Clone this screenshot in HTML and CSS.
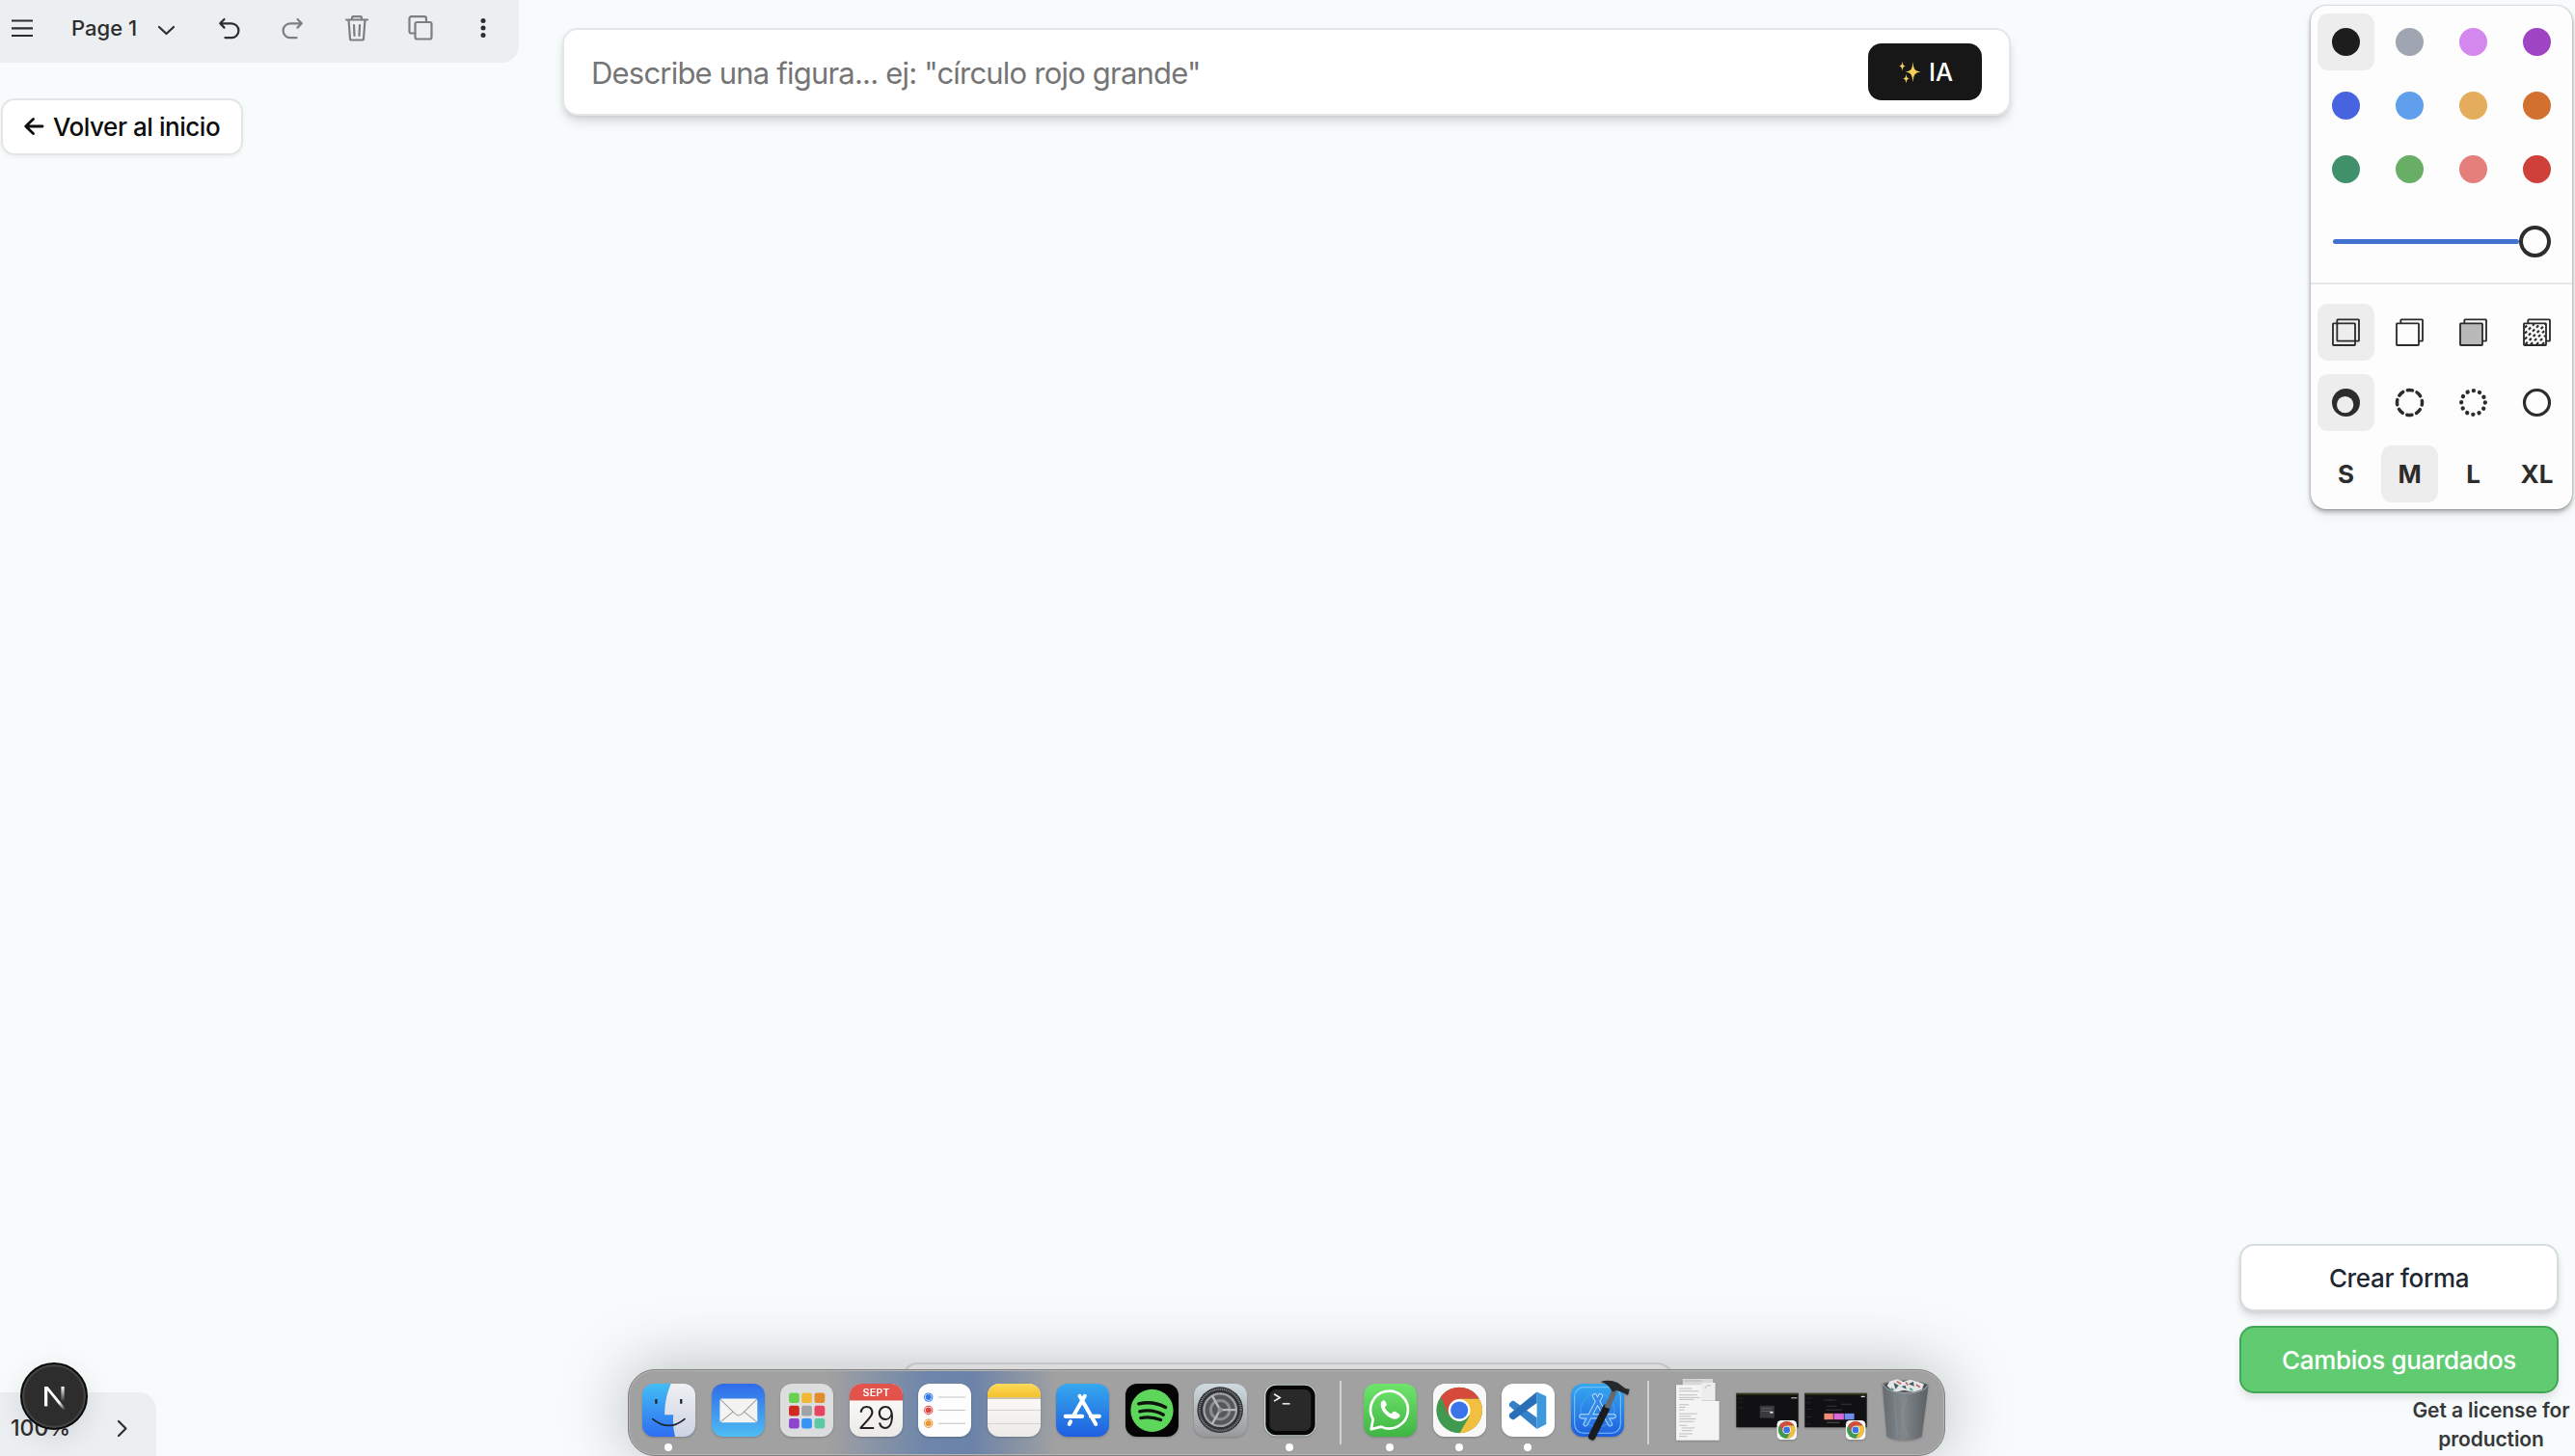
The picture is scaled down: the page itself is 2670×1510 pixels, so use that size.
FILE: index.html
```html
<!DOCTYPE html>
<html lang="es">
<head>
<meta charset="utf-8">
<title>Pizarra</title>
<link rel="stylesheet" href="styles.css">
</head>
<body>
<svg class="defs" width="0" height="0" aria-hidden="true">
  <defs>
    <linearGradient id="gFinder" x1="0" y1="0" x2="0" y2="1"><stop offset="0" stop-color="#43bdf5"/><stop offset="1" stop-color="#2f6df0"/></linearGradient>
    <linearGradient id="gFace" x1="0" y1="0" x2="0" y2="1"><stop offset="0" stop-color="#f1f1f5"/><stop offset="1" stop-color="#cdd3e2"/></linearGradient>
    <linearGradient id="gMail" x1="0" y1="0" x2="0" y2="1"><stop offset="0" stop-color="#2f6be9"/><stop offset="1" stop-color="#4fbdf3"/></linearGradient>
    <linearGradient id="gPaper" x1="0" y1="0" x2="0" y2="1"><stop offset="0" stop-color="#fff"/><stop offset="1" stop-color="#eceae6"/></linearGradient>
    <linearGradient id="gYellow" x1="0" y1="0" x2="0" y2="1"><stop offset="0" stop-color="#fbdb5b"/><stop offset="1" stop-color="#f5bf2b"/></linearGradient>
    <linearGradient id="gStore" x1="0" y1="0" x2="0" y2="1"><stop offset="0" stop-color="#35a8ef"/><stop offset="1" stop-color="#1f5fe0"/></linearGradient>
    <linearGradient id="gSteel" x1="0" y1="0" x2="0" y2="1"><stop offset="0" stop-color="#cfdbe0"/><stop offset="1" stop-color="#98999b"/></linearGradient>
    <linearGradient id="gWhats" x1="0" y1="0" x2="0" y2="1"><stop offset="0" stop-color="#6fe46c"/><stop offset="1" stop-color="#3fb544"/></linearGradient>
    <linearGradient id="gBin" x1="0" y1="0" x2="1" y2="0"><stop offset="0" stop-color="#666b70"/><stop offset=".45" stop-color="#82878c"/><stop offset="1" stop-color="#595e63"/></linearGradient>
    <linearGradient id="gN" x1="0" y1="0" x2="0" y2="1"><stop offset="0" stop-color="#fff"/><stop offset="1" stop-color="#fff" stop-opacity="0"/></linearGradient>
    <linearGradient id="gNd" gradientUnits="userSpaceOnUse" x1="160" y1="170" x2="200" y2="216"><stop offset="0" stop-color="#fff"/><stop offset=".5" stop-color="#fff"/><stop offset="1" stop-color="#fff" stop-opacity="0"/></linearGradient>
    <clipPath id="cFinder"><rect x="78" y="103" width="164" height="164" rx="36"/></clipPath>
    <clipPath id="cCal"><rect x="721" y="103" width="164" height="164" rx="36"/></clipPath>
    <clipPath id="cNotes"><rect x="70" y="103" width="164" height="164" rx="36"/></clipPath>
    <clipPath id="cChrome"><circle cx="0" cy="0" r="71"/></clipPath>
    <symbol id="chrome" viewBox="-72 -72 144 144">
      <g clip-path="url(#cChrome)">
        <rect x="-72" y="-72" width="144" height="144" fill="#3f9a50"/>
        <path d="M-72 -40 L-30 17 L-72 -72 L72 -72 L72 -35 L0 -35 L-32 18 Z" fill="#d64a3b"/>
        <path d="M0 -35 L80 -35 L80 80 L-4 80 L32 17 L0 0Z" fill="#f3bf3f"/>
      </g>
      <circle r="34" fill="#fff"/><circle r="27" fill="#3a74e8"/>
    </symbol>
  </defs>
</svg>

<main class="app">
  <section class="top">
    <div class="top-left">
      <nav class="menubar">
        <svg class="mi menu" viewBox="0 0 22 18"><path d="M0 1.500h22M0 9.300h22M0 17h22"/></svg>
        <span class="page-name">Page 1</span>
        <svg class="mi chev" viewBox="0 0 17 9"><path d="M1 1l7.500 7L16 1"/></svg>
        <svg class="mi undo" viewBox="0 0 22 22"><path d="M5.500 1L1.200 5.300l4.300 4.300M1.500 5.300H13a7.300 7.300 0 0 1 0 14.900H6.500"/></svg>
        <svg class="mi redo dim" viewBox="0 0 22 22"><path d="M16.500 1l4.300 4.300-4.300 4.300M20.500 5.300H9a7.300 7.300 0 0 0 0 14.900h6.500"/></svg>
        <svg class="mi trash dim" viewBox="0 0 24 27"><path d="M1 4.500h22M3.500 4.500L5 24a1.500 1.500 0 0 0 1.500 1.500h11A1.500 1.500 0 0 0 19 24l1.500-19.500M7 4V2.500A1.300 1.300 0 0 1 8.300 1.200h7.400A1.300 1.300 0 0 1 17 2.500V4M9 10l.5 11M15 10l-.5 11"/></svg>
        <svg class="mi copy dim" viewBox="0 0 26 26"><rect x="7.500" y="7" width="17" height="17.500" rx="2"/><path d="M7.500 18.500H3.500a2 2 0 0 1-2-2V3.200a2 2 0 0 1 2-2H17a2 2 0 0 1 2 2V7"/></svg>
        <svg class="mi dots" viewBox="0 0 6 20"><circle cx="3" cy="2.600" r="2.500"/><circle cx="3" cy="10" r="2.500"/><circle cx="3" cy="17.400" r="2.500"/></svg>
      </nav>
      <button class="back"><svg viewBox="0 0 20 18"><path d="M19 9H2M9.500 1.500L1.700 9l7.800 7.500"/></svg><span>Volver al inicio</span></button>
    </div>

    <form class="prompt">
      <span class="placeholder">Describe una figura... ej: "círculo rojo grande"</span>
      <button class="ai" type="button">
        <svg viewBox="0 0 24 24"><path d="M14.500 1C15.300 8.500 16 10.500 22.500 11.500 16 12.500 15.300 15 14.500 22.500 13.700 15 13 12.500 6.800 11.500 13 10.500 13.700 8.500 14.500 1ZM3.500 .5C4 4 4.300 5 7 5.500 4.300 6 4 7.500 3.500 10.500 3 7.500 2.700 6 0 5.500 2.700 5 3 4 3.500 .5ZM7.500 13.500C8 17 8.300 18 11 18.500 8.300 19 8 20.500 7.500 23.500 7 20.500 6.700 19 4 18.500 6.700 18 7 17 7.500 13.500Z"/></svg>
        <span>IA</span>
      </button>
    </form>

    <aside class="style-panel">
      <div class="cells colors">
        <i class="cell on"><b class="sw black"></b></i><i class="cell"><b class="sw grey"></b></i><i class="cell"><b class="sw lilac"></b></i><i class="cell"><b class="sw violet"></b></i>
        <i class="cell"><b class="sw blue"></b></i><i class="cell"><b class="sw sky"></b></i><i class="cell"><b class="sw yellow"></b></i><i class="cell"><b class="sw orange"></b></i>
        <i class="cell"><b class="sw green"></b></i><i class="cell"><b class="sw lime"></b></i><i class="cell"><b class="sw rose"></b></i><i class="cell"><b class="sw red"></b></i>
      </div>
      <div class="slider"><div class="track"></div><div class="thumb"></div></div>
      <div class="cells options">
        <i class="cell on"><svg viewBox="0 0 87 87"><rect x="16" y="4" width="68" height="67" rx="2"/><rect x="3" y="16" width="69" height="68" rx="2"/></svg></i>
        <i class="cell"><svg viewBox="0 0 87 87"><rect x="16" y="4" width="68" height="67" rx="2"/><rect x="3" y="16" width="69" height="68" rx="2" fill="#fdfdfd"/></svg></i>
        <i class="cell"><svg viewBox="0 0 87 87"><rect x="16" y="4" width="68" height="67" rx="2" fill="#fdfdfd"/><rect x="3" y="16" width="69" height="68" rx="2" fill="#b9b9b9"/></svg></i>
        <i class="cell"><svg viewBox="0 0 87 87"><rect x="16" y="4" width="68" height="67" rx="2"/><rect x="3" y="16" width="69" height="68" rx="2" fill="#fdfdfd"/><path class="hatch" d="M6 29L17 18M6 47L35 18M6 65L53 18M8 81L70 19M24 82L70 36M42 82L70 54M60 82L70 72"/></svg></i>

        <i class="cell on"><svg viewBox="0 0 87 87"><circle cx="43.500" cy="43.500" r="43.500" fill="#2c2c2c" stroke="none"/><circle cx="41" cy="50" r="26" fill="#ededed" stroke="none"/></svg></i>
        <i class="cell"><svg viewBox="0 0 87 87"><circle class="ring dashed" cx="43.500" cy="43.500" r="39"/></svg></i>
        <i class="cell"><svg viewBox="0 0 87 87"><circle class="ring dotted" cx="43.500" cy="43.500" r="37"/></svg></i>
        <i class="cell"><svg viewBox="0 0 87 87"><circle class="ring" cx="43.500" cy="43.500" r="39"/></svg></i>

        <i class="cell">S</i><i class="cell on">M</i><i class="cell">L</i><i class="cell">XL</i>
      </div>
    </aside>
  </section>

  <section class="bottom">
    <div class="zoombar"><span>100%</span><svg viewBox="0 0 10 17"><path d="M1 1l7.500 7.500L1 16"/></svg></div>
    <div class="actions">
      <button class="btn create">Crear forma</button>
      <button class="btn saved">Cambios guardados</button>
      <p class="license">Get a license for production</p>
    </div>
  </section>
</main>

<div class="next-badge"><svg viewBox="130 142 70 74"><path d="M133 206V144h10v62z" fill="#fff"/><path d="M133 144h11l56 69-8 4z" fill="url(#gNd)"/><path d="M186 144h10v48h-10z" fill="url(#gN)"/></svg></div>

<div class="tray"></div>
<div class="dock">
  <div class="slot run"><svg viewBox="78 103 164 164"><g clip-path="url(#cFinder)"><rect x="78" y="103" width="164" height="164" fill="url(#gFinder)"/><path d="M168 100Q146 150 147 199H174Q171 235 180 270H250V100Z" fill="url(#gFace)"/></g><path d="M121 151v14M198 151v14" stroke="#20293a" stroke-width="7"/><path d="M110 212Q160 253 209 212" fill="none" stroke="#1c2430" stroke-width="5" stroke-linecap="round"/></svg></div>
  <div class="slot"><svg viewBox="291 103 164 164"><rect x="291" y="103" width="164" height="164" rx="36" fill="url(#gMail)"/><rect x="316" y="149" width="116" height="74" rx="6" fill="#f3f3f2"/><path d="M318 152L363 196Q374 206 385 196L430 152M318 221L357 190M430 221L391 190" fill="none" stroke="#9e9e9e" stroke-width="3"/></svg></div>
  <div class="slot"><svg viewBox="506 103 164 164"><rect x="506" y="103" width="164" height="164" rx="36" fill="#dcdddf"/><g><rect x="533" y="131" width="32" height="32" rx="7" fill="#68d14f"/><rect x="572" y="131" width="32" height="32" rx="7" fill="#f2b834"/><rect x="612" y="131" width="32" height="32" rx="7" fill="#e38c2c"/><rect x="533" y="171" width="32" height="32" rx="7" fill="#cf2a20"/><rect x="572" y="171" width="32" height="32" rx="7" fill="#a0a3a6"/><rect x="612" y="171" width="32" height="32" rx="7" fill="#e8435f"/><rect x="533" y="210" width="32" height="32" rx="7" fill="#8e44cf"/><rect x="572" y="210" width="32" height="32" rx="7" fill="#3793f5"/><rect x="612" y="210" width="32" height="32" rx="7" fill="#5cc9a4"/></g></svg></div>
  <div class="slot"><svg viewBox="721 103 164 164"><g clip-path="url(#cCal)"><rect x="721" y="103" width="164" height="164" fill="url(#gPaper)"/><rect x="721" y="103" width="164" height="52" fill="#e2534c"/></g><text class="cal-month" x="803" y="142" textLength="83" lengthAdjust="spacingAndGlyphs">SEPT</text><text class="cal-day" x="803" y="242" textLength="116" lengthAdjust="spacingAndGlyphs">29</text></svg></div>
  <div class="slot"><svg viewBox="936 103 164 164"><rect x="936" y="103" width="164" height="164" rx="36" fill="#fdfdfd"/><path d="M998 145h84M998 185h84M998 226h84" stroke="#c3c3c3" stroke-width="3"/><g stroke-width="3"><circle cx="968" cy="145" r="12.500" fill="none" stroke="#2f79e8"/><circle cx="968" cy="145" r="9" fill="#2f79e8"/><circle cx="968" cy="185" r="12.500" fill="none" stroke="#dc4540"/><circle cx="968" cy="185" r="9" fill="#dc4540"/><circle cx="968" cy="226" r="12.500" fill="none" stroke="#e8962f"/><circle cx="968" cy="226" r="9" fill="#e8962f"/></g></svg></div>
  <div class="slot"><svg viewBox="70 103 164 164"><g clip-path="url(#cNotes)"><rect x="70" y="103" width="164" height="164" fill="url(#gPaper)"/><rect x="70" y="103" width="164" height="43" fill="url(#gYellow)"/><path d="M70 148h164" stroke="#b3ab98" stroke-width="4"/><path d="M70 185h164M70 227h164" stroke="#d5d4d1" stroke-width="3"/></g></svg></div>
  <div class="slot"><svg viewBox="285 103 164 164"><rect x="285" y="103" width="164" height="164" rx="36" fill="url(#gStore)"/><path d="M374 141L338 204M330 220L326 228M358 141L408 228M314 204H366M392 204H419" stroke="#fff" stroke-width="12" stroke-linecap="round"/></svg></div>
  <div class="slot"><svg viewBox="500 103 164 164"><rect x="500" y="103" width="164" height="164" rx="36" fill="#040404"/><circle cx="582" cy="186" r="66" fill="#5ed65c"/><path d="M541 165Q585 155 624 176M544 189Q583 180 617 199M547 209Q580 203 609 215" fill="none" stroke="#0b150b" stroke-width="10" stroke-linecap="round"/></svg></div>
  <div class="slot"><svg viewBox="714 103 164 164"><rect x="714" y="103" width="164" height="164" rx="36" fill="url(#gSteel)"/><circle cx="795" cy="184" r="71" fill="#303235"/><circle cx="795" cy="184" r="64" fill="none" stroke="#8b8e91" stroke-width="6" stroke-dasharray="3 3"/><circle cx="795" cy="184" r="50" fill="#55585b" stroke="#a0a3a5" stroke-width="7"/><circle cx="795" cy="184" r="29" fill="none" stroke="#8a8d90" stroke-width="9"/><path d="M795 184H845M795 184L770 140M795 184L770 228" stroke="#b5b8ba" stroke-width="7"/><circle cx="795" cy="184" r="8" fill="#8d9092"/></svg></div>
  <div class="slot run"><svg viewBox="926 103 164 164"><rect x="929" y="105" width="160" height="160" rx="36" fill="#c8d6da"/><rect x="933" y="108" width="153" height="154" rx="33" fill="#070707"/><rect x="945" y="121" width="128" height="128" rx="20" fill="#292929"/><path d="M959 135L977 146 959 157" fill="none" stroke="#f1f1f1" stroke-width="5"/><path d="M985 165h23" stroke="#e2e2e2" stroke-width="5"/></svg></div>
  <span class="sep"></span>
  <div class="slot run"><svg viewBox="133 103 164 164"><rect x="133" y="103" width="164" height="164" rx="36" fill="url(#gWhats)"/><path d="M162 213A58 58 0 1 1 187 236L156 244Z" fill="none" stroke="#fff" stroke-width="8" stroke-linejoin="round"/><path d="M199 156Q194 151 188 159C177 181 211 217 235 212Q248 207 244 198L230 189Q225 187 218 196Q203 189 198 176Q205 170 204 166Z" fill="#fff"/></svg></div>
  <div class="slot run"><svg viewBox="347 103 164 164"><rect x="347" y="103" width="164" height="164" rx="36" fill="#f8f8f8"/><use href="#chrome" x="356" y="113" width="144" height="144"/></svg></div>
  <div class="slot run"><svg viewBox="561 103 164 164"><rect x="561" y="103" width="164" height="164" rx="36" fill="#fff"/><path d="M586 163L594 156Q597 155 600 157L670 208V243L585 172Q583 168 586 163Z" fill="#3481c9"/><path d="M670 128L699 142V228L670 243Z" fill="#3f97dc"/><path d="M670 128L585 197Q583 203 586 208L594 214Q597 215 600 213L670 163Z" fill="#2a70b8"/></svg></div>
  <div class="slot"><svg viewBox="775 103 164 164"><rect x="775" y="103" width="164" height="164" rx="36" fill="url(#gStore)"/><rect x="786" y="114" width="142" height="142" rx="28" fill="none" stroke="#7cc8f6" stroke-width="3"/><circle cx="857" cy="185" r="52" fill="none" stroke="#58aef0" stroke-width="2"/><path d="M866 141L820 228M848 141L896 228M807 204H907" stroke="#bfe2fb" stroke-width="15" stroke-linecap="round"/><path d="M866 141L820 228M848 141L896 228M807 204H907" stroke="#3689e8" stroke-width="10" stroke-linecap="round"/><path d="M884 178L840 266" stroke="#1b1c20" stroke-width="23" stroke-linecap="round"/><path d="M911 122L886 178" stroke="#66696e" stroke-width="17"/><path d="M867 97Q892 89 919 100L943 118 956 120 951 139 938 132 915 123 903 129Q892 104 867 97Z" fill="#26282b"/></svg></div>
  <span class="sep"></span>
  <div class="slot"><svg viewBox="100 103 164 164"><path d="M135 88h94v60h-94z" fill="#d8d8d8"/><path d="M115 107h80v50h53v121H115z" fill="#f4f4f4"/><path d="M194 100h42v56l-42 0z" fill="#ededed"/><path d="M205 118Q204 108 222 108M140 94h54M124 118h40M124 126h60M124 138h56M124 146h64M124 152h46M124 168h30M124 176h20M124 184h16M124 196h56M124 204h36M124 212h52M124 220h46M124 232h24M132 240h40M132 248h32M124 258h40M124 266h26" fill="none" stroke="#a5a5a5" stroke-width="2"/></svg></div>
  <div class="slot"><svg viewBox="314 103 164 164"><rect x="300" y="132" width="192" height="106" fill="#111113"/><path d="M300 135h192" stroke="#3d3b1e" stroke-width="5"/><path d="M304 148h20M304 160h16M304 177h18" stroke="#303034" stroke-width="2"/><path d="M470 147h18" stroke="#aaa" stroke-width="4"/><rect x="373" y="171" width="45" height="38" fill="#3a3a3c"/><path d="M378 180h32M378 188h34" stroke="#777" stroke-width="2"/><path d="M404 192h10" stroke="#ddd" stroke-width="5"/><rect x="426" y="216" width="61" height="60" rx="13" fill="#fafafa"/><use href="#chrome" x="429" y="219" width="54" height="54"/></svg></div>
  <div class="slot"><svg viewBox="528 103 164 164"><rect x="514" y="132" width="192" height="106" fill="#111113"/><path d="M514 135h192" stroke="#3d3b1e" stroke-width="5"/><path d="M518 148h18M518 162h14M518 182h16M518 206h16M518 228h14" stroke="#303034" stroke-width="2"/><path d="M688 143h12" stroke="#ddd" stroke-width="4"/><path d="M574 154h36M582 172h30M626 166h34M580 184h50" stroke="#39393d" stroke-width="3"/><rect x="574" y="195" width="28" height="19" fill="#f08a7c"/><rect x="604" y="195" width="31" height="19" fill="#d968d8"/><rect x="637" y="195" width="30" height="19" fill="#718df0"/><path d="M582 223h40" stroke="#555" stroke-width="3"/><rect x="641" y="216" width="61" height="60" rx="13" fill="#fafafa"/><use href="#chrome" x="644" y="219" width="54" height="54"/></svg></div>
  <div class="slot"><svg viewBox="742 103 164 164"><path d="M753 102L767 266Q790 279 823 278 855 278 875 267L896 106Q825 82 753 102Z" fill="url(#gBin)"/><ellipse cx="825" cy="111" rx="67" ry="18" fill="#4b4f53"/><path d="M768 110L775 96 800 89 818 97 840 90 866 98 882 104 876 121 850 129 820 123 790 130Z" fill="#e4e5e6"/><path d="M788 100l16 8-10 12zM834 104l15-7 3 14zM812 112l12-4 4 12z" fill="#455b62"/><path d="M798 96l13 8M858 106l12 8M826 98l6 10" stroke="#c7665c" stroke-width="5"/><path d="M780 117l9 6M838 118l9 6" stroke="#4a9f85" stroke-width="5"/><path d="M753 103Q770 131 824 132T896 107" fill="none" stroke="#94999d" stroke-width="4"/><path d="M790 136L800 270M830 150Q800 200 835 270" fill="none" stroke="#9a9fa3" stroke-width="7" opacity=".2"/></svg></div>
</div>
</body>
</html>
```
FILE: styles.css
```css
* { box-sizing: border-box; margin: 0; padding: 0; }
body { width: 2670px; height: 1510px; overflow: hidden; position: relative; background: #f8fbfc; font-family: Inter, "Liberation Sans", sans-serif; color: #2d2d2d; }
button { font: inherit; border: 0; }
svg { display: block; overflow: visible; flex: none; }
.defs { position: absolute; }
.app { height: 1510px; display: flex; flex-direction: column; justify-content: space-between; }
.top { display: flex; align-items: flex-start; }
.top-left { width: 583px; flex: none; }

.menubar { width: 538px; height: 65px; padding: 0 34px 7px 12px; display: flex; align-items: center; background: #ebeff2; border-bottom-right-radius: 18px; }
.mi { fill: none; stroke: #2d2d2d; stroke-width: 2.200; stroke-linecap: round; stroke-linejoin: round; }
.dim { stroke: #7c7f82; }
.menu { width: 22px; height: 18px; stroke-linecap: butt; }
.page-name { width: 70px; margin-left: 40px; font-size: 22px; font-weight: 500; white-space: nowrap; }
.chev { width: 17px; height: 9px; margin: 4px 0 0 20px; }
.undo { width: 22px; height: 22px; margin-left: 46px; margin-top: 1px; }
.redo { width: 22px; height: 22px; margin-left: 43px; margin-top: 1px; }
.trash { width: 24px; height: 27px; margin-left: 43.500px; }
.copy { width: 26px; height: 26px; margin-left: 41px; }
.dots { width: 6px; height: 20px; margin-left: 49.500px; fill: #2d2d2d; stroke: none; }

.back { display: flex; align-items: center; gap: 10px; width: 251px; height: 59px; margin: 37px 0 0 1px; padding: 0 0 1px 22px; background: #fff; border: 2px solid #e4e5e6; border-radius: 14px; box-shadow: 0 2px 4px rgba(0,0,0,.05); color: #0c0c0c; font-size: 26px; font-weight: 500; white-space: nowrap; }
.back svg { width: 20px; height: 18px; fill: none; stroke: #0c0c0c; stroke-width: 2.800; stroke-linecap: round; stroke-linejoin: round; }
.back span { letter-spacing: -.45px; }

.prompt { display: flex; align-items: center; justify-content: space-between; width: 1502px; height: 91px; margin-top: 29px; padding: 0 28px 0 28px; background: #fff; border: 2px solid #e4e6e7; border-radius: 16px; box-shadow: 0 8px 12px -2px rgba(0,0,0,.12), 0 3px 6px -2px rgba(0,0,0,.12); }
.placeholder { padding-top: 1px; font-size: 31px; letter-spacing: -.8px; color: #757575; white-space: nowrap; }
.ai { display: flex; align-items: center; gap: 7px; width: 118px; height: 59px; padding-left: 32px; background: #171717; border-radius: 14px; color: #fff; font-size: 25.500px; font-weight: 500; }
.ai svg { width: 24px; height: 24px; fill: #f5cf57; }

.style-panel { width: 271px; height: 522px; margin: 6px 0 0 311px; padding: 8px 8px 8px 7px; background: #fdfdfd; border-radius: 16px; box-shadow: 0 0 2px rgba(0,0,0,.35), 0 3px 5px rgba(0,0,0,.3), 0 6px 12px rgba(0,0,0,.06); }
.cells { display: grid; grid-template-columns: repeat(4, 59px); column-gap: 7px; }
.colors { row-gap: 7px; }
.cell { display: flex; align-items: center; justify-content: center; height: 59px; border-radius: 11px; font-style: normal; font-size: 26px; font-weight: 700; color: #2c2c2c; }
.cell.on { background: #ededed; }
.sw { width: 29px; height: 29px; border-radius: 50%; }
.black { background: #1d1d1d; } .grey { background: #9fa6b2; } .lilac { background: #d488ed; } .violet { background: #9f44c2; }
.blue { background: #4863df; } .sky { background: #5f9fec; } .yellow { background: #e4ad5b; } .orange { background: #d27030; }
.green { background: #41906c; } .lime { background: #68ae65; } .rose { background: #e57f7c; } .red { background: #cf403b; }
.slider { display: flex; align-items: center; height: 90px; margin: 0 -8px 20px -7px; padding: 3px 22px 0 23px; border-bottom: 2px solid #e6e7e8; }
.track { flex: 1; height: 5px; border-radius: 3px; background: #4272cf; }
.thumb { width: 33px; height: 33px; border: 4px solid #2c2c2c; border-radius: 50%; background: #fdfdfd; }
.options { row-gap: 14.300px; }
.cell svg { width: 29px; height: 29px; fill: none; stroke: #2c2c2c; stroke-width: 5.500; }
.cell .ring { stroke-width: 9.500; }
.cell .dashed { stroke-width: 10.500; stroke-linecap: round; stroke-dasharray: 16 14.630; stroke-dashoffset: 8; }
.cell .dotted { stroke-width: 13; stroke-linecap: round; stroke-dasharray: .1 19.270; }
.cell .hatch { stroke-width: 6.500; stroke-dasharray: 9 8; }

.bottom { display: flex; justify-content: space-between; align-items: flex-end; }
.zoombar { display: flex; align-items: center; justify-content: space-between; width: 162px; height: 66px; padding: 8px 30px 0 11px; background: #ebeff1; border-top-right-radius: 18px; font-size: 23px; font-weight: 500; }
.zoombar svg { width: 10px; height: 17px; fill: none; stroke: #2d2d2d; stroke-width: 2.200; stroke-linecap: round; stroke-linejoin: round; }
.actions { display: flex; flex-direction: column; align-items: flex-start; width: 348px; height: 220px; }
.btn { width: 331px; height: 70px; border-radius: 15px; font-size: 26px; font-weight: 500; letter-spacing: -.35px; padding-top: 1px; white-space: nowrap; }
.create { background: #fff; border: 2px solid #d9dcdf; color: #1f2733; box-shadow: 0 6px 9px -1px rgba(0,0,0,.13), 0 2px 4px rgba(0,0,0,.06); }
.saved { margin-top: 15px; background: #61cb72; border: 2px solid #43a556; color: #fff; box-shadow: 0 6px 9px -1px rgba(0,0,0,.1); }
.license { align-self: flex-end; width: 174px; margin-top: 3px; text-align: center; font-size: 21px; letter-spacing: -.1px; line-height: 30px; font-weight: 600; color: #37383a; }

.next-badge { position: absolute; left: 21px; top: 1413px; width: 70px; height: 70px; display: flex; align-items: center; justify-content: center; border-radius: 50%; background: #2d2d2d; border: 2px solid #0b0b0b; box-shadow: inset 0 0 0 2px #464646, 0 8px 30px rgba(0,0,0,.1); }
.next-badge svg { width: 23px; height: 25px; margin-top: 3px; }

.tray { position: absolute; left: 934px; top: 1413px; width: 802px; height: 97px; background: #fcfcfc; border: 2px solid #dedfe0; border-radius: 18px; }
.dock { position: absolute; left: 651px; top: 1420px; width: 1366px; height: 90px; display: flex; align-items: flex-start; padding: 12px 5px 0 6px; border: 1px solid #7e7f80; border-radius: 28px; background: linear-gradient(90deg, transparent 205px, #6e86aa 308px, #6b83a9 355px, transparent 445px), #a1a1a1; box-shadow: inset 0 0 0 1px #b5b5b5, 0 0 70px rgba(0,0,0,.27); }
.slot { position: relative; width: 71.500px; flex: none; display: flex; justify-content: center; }
.slot svg { width: 55px; height: 55px; margin-top: 1.500px; filter: drop-shadow(0 1px 1px rgba(0,0,0,.2)); }
.run::after { content: ""; position: absolute; left: 31px; top: 64px; width: 8px; height: 8px; border-radius: 50%; background: #fff; }
.sep { width: 2px; height: 66px; margin: -1px 15.500px 0; flex: none; background: #d2d2d2; }
.cal-month { font: 600 29px Inter, sans-serif; fill: #fff; text-anchor: middle; }
.cal-day { font: 300 97px Inter, sans-serif; fill: #222; text-anchor: middle; }
```
